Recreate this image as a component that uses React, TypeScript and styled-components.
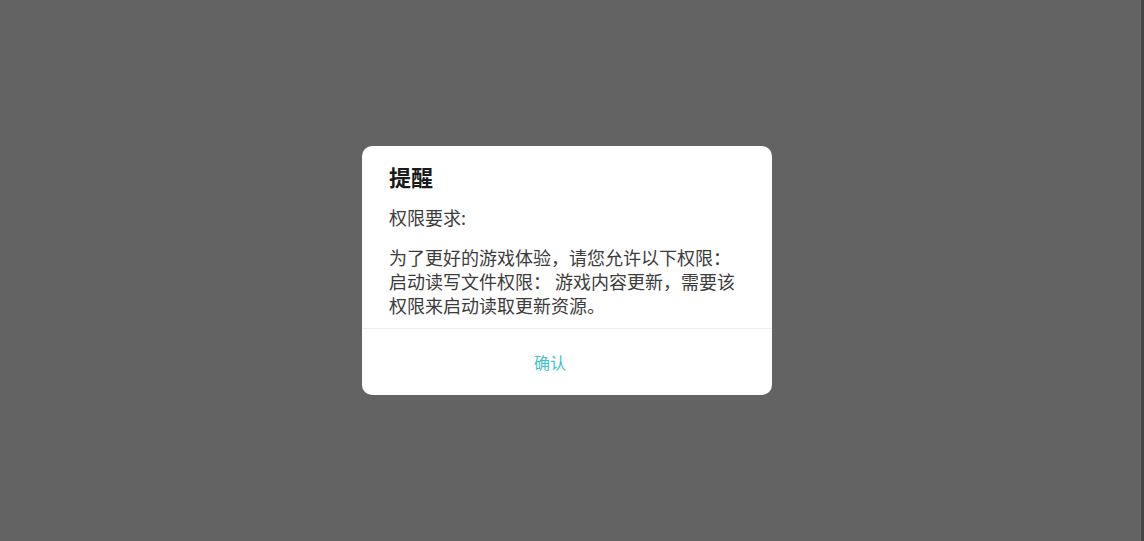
import React from "react";
import styled, { createGlobalStyle } from "styled-components";

const Global = createGlobalStyle`
  html, body { margin: 0; padding: 0; height: 100%; }
  body { background: #636363; font-family: "Noto Sans CJK SC", "Noto Sans", sans-serif; }
  #root { height: 100%; }
`;

const Screen = styled.div`
  display: flex;
  width: 1144px;
  height: 541px;
  background: #636363;
`;

const Stage = styled.div`
  flex: 1;
  display: flex;
  align-items: center;
  justify-content: center;
  padding-right: 6px;
`;

const EdgeStrip = styled.div`
  width: 3px;
  background: #464646;
  border-left: 1px solid #6a6a6a;
`;

const Dialog = styled.div`
  width: 410px;
  background: #ffffff;
  border-radius: 10px;
  overflow: hidden;
  display: flex;
  flex-direction: column;
`;

const Content = styled.div`
  padding: 14px 27px 11px;
  display: flex;
  flex-direction: column;
`;

const Title = styled.div`
  font-size: 22px;
  line-height: 32px;
  font-weight: 700;
  color: #1a1a1a;
`;

const Paragraph = styled.p<{ $gap: number }>`
  margin: ${(p) => p.$gap}px 0 0;
  font-size: 18px;
  line-height: 24px;
  color: #3c3c3c;
`;

const Footer = styled.div`
  border-top: 1px solid #ececec;
  height: 66px;
  padding-right: 34px;
  display: flex;
  align-items: center;
  justify-content: center;
`;

const ConfirmButton = styled.button`
  border: none;
  background: none;
  font-family: inherit;
  font-size: 16px;
  color: #3fc3c7;
  cursor: pointer;
  padding: 0;
`;

export default function App() {
  return (
    <>
      <Global />
      <Screen>
        <Stage>
          <Dialog>
            <Content>
              <Title>提醒</Title>
              <Paragraph $gap={13}>权限要求:</Paragraph>
              <Paragraph $gap={16}>
                为了更好的游戏体验，请您允许以下权限：
                <br />
                启动读写文件权限： 游戏内容更新，需要该权限来启动读取更新资源。
              </Paragraph>
            </Content>
            <Footer>
              <ConfirmButton>确认</ConfirmButton>
            </Footer>
          </Dialog>
        </Stage>
        <EdgeStrip />
      </Screen>
    </>
  );
}
